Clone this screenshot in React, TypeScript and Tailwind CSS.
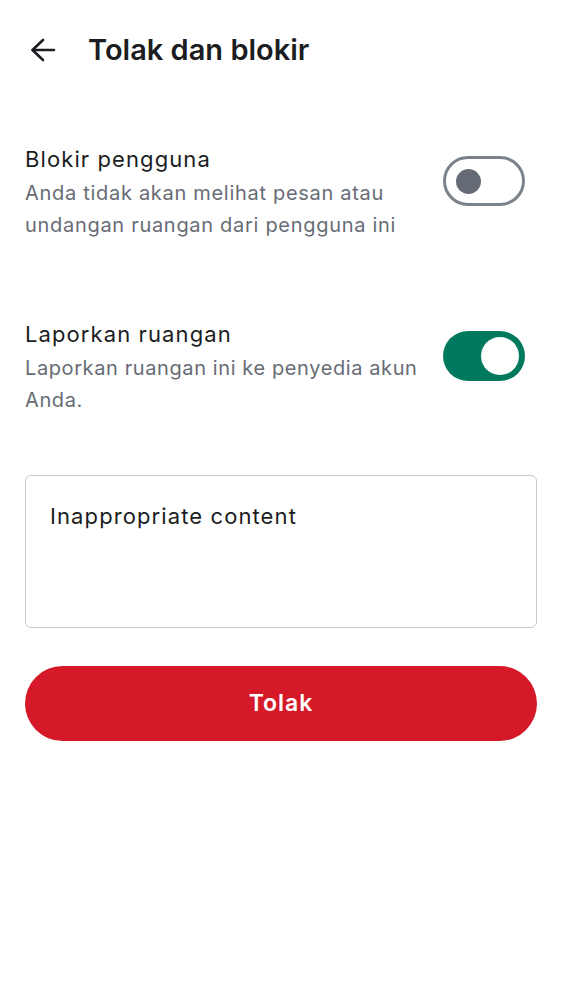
export default function App() {
  return (
    <div className="min-h-[1000px] w-full bg-white font-['Inter',sans-serif] text-[#1b1d22]">
      {/* Top bar */}
      <header className="flex h-[100px] items-center">
        <button type="button" className="ml-[28px] flex h-[30px] w-[30px] items-center justify-center" aria-label="Kembali">
          <svg width="30" height="30" viewBox="0 0 30 30" fill="none" stroke="#1b1d22" strokeWidth="2.6" strokeLinecap="round" strokeLinejoin="round">
            <line x1="5" y1="15" x2="26" y2="15" />
            <polyline points="15,5 4.5,15 15,25" />
          </svg>
        </button>
        <h1 className="ml-[30px] text-[29px] font-semibold">Tolak dan blokir</h1>
      </header>

      <div className="px-[25px]">
        {/* Block user */}
        <div className="mt-[43px] flex items-start justify-between">
          <div className="w-[395px]">
            <div className="text-[22px] leading-[32px] tracking-[1.1px]">Blokir pengguna</div>
            <div className="mt-[2px] text-[20px] leading-[32px] tracking-[0.7px] text-[#676c75]">
              Anda tidak akan melihat pesan atau undangan ruangan dari pengguna ini
            </div>
          </div>
          <div className="mt-[13px] mr-[12px] flex h-[50px] w-[82px] shrink-0 items-center rounded-full border-[3px] border-[#7c828b] px-[10px]">
            <div className="h-[25px] w-[25px] rounded-full bg-[#656b74]" />
          </div>
        </div>

        {/* Report room */}
        <div className="mt-[77px] flex items-start justify-between">
          <div className="w-[400px]">
            <div className="text-[22px] leading-[32px] tracking-[1.1px]">Laporkan ruangan</div>
            <div className="mt-[2px] text-[20px] leading-[32px] tracking-[0.6px] text-[#676c75]">
              Laporkan ruangan ini ke penyedia akun Anda.
            </div>
          </div>
          <div className="mt-[13px] mr-[12px] flex h-[50px] w-[82px] shrink-0 items-center justify-end rounded-full bg-[#007a5e] px-[6px]">
            <div className="h-[38px] w-[38px] rounded-full bg-white" />
          </div>
        </div>

        {/* Reason */}
        <div className="mt-[59px] h-[153px] rounded-[6px] border-[1.5px] border-[#c6cad1] px-[24px] pt-[24px] text-[22px] leading-[32px] tracking-[1.1px]">
          Inappropriate content
        </div>

        <button
          type="button"
          className="mt-[38px] flex h-[75px] w-full items-center justify-center rounded-full bg-[#d51928] text-[23px] font-semibold tracking-[1px] text-white"
        >
          Tolak
        </button>
      </div>
    </div>
  );
}
